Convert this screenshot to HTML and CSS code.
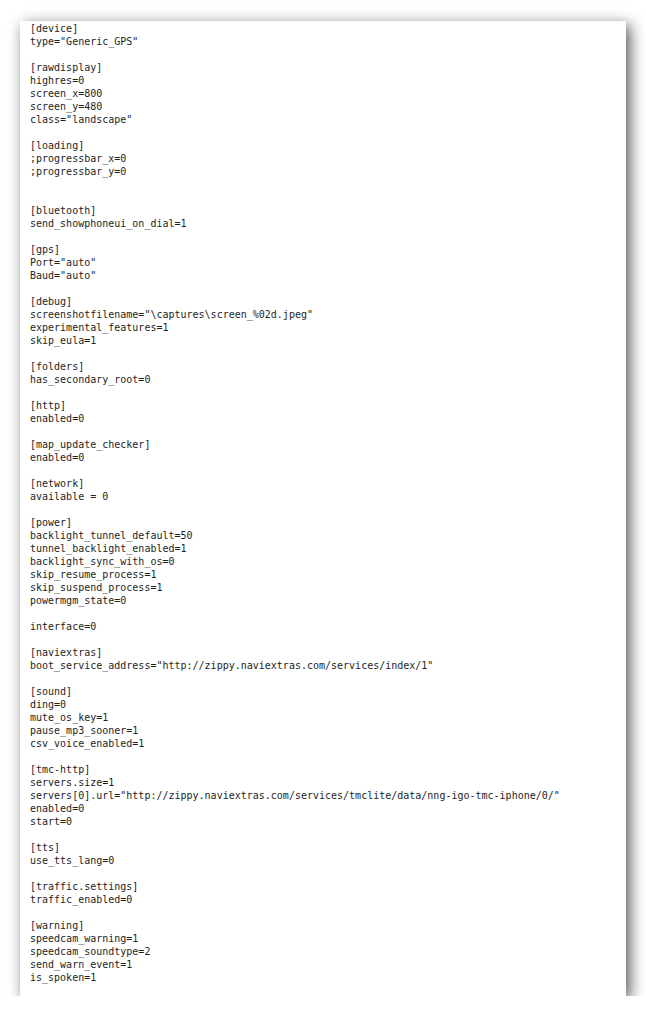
FILE: index.html
```html
<!DOCTYPE html>
<html>
<head>
<meta charset="utf-8">
<link rel="stylesheet" href="styles.css">
</head>
<body>
<div class="page">
<pre class="code">[device]
type="Generic_GPS"

[rawdisplay]
highres=0
screen_x=800
screen_y=480
class="landscape"

[loading]
;progressbar_x=0
;progressbar_y=0


[bluetooth]
send_showphoneui_on_dial=1

[gps]
Port="auto"
Baud="auto"

[debug]
screenshotfilename="\captures\screen_%02d.jpeg"
experimental_features=1
skip_eula=1

[folders]
has_secondary_root=0

[http]
enabled=0

[map_update_checker]
enabled=0

[network]
available = 0

[power]
backlight_tunnel_default=50
tunnel_backlight_enabled=1
backlight_sync_with_os=0
skip_resume_process=1
skip_suspend_process=1
powermgm_state=0

interface=0

[naviextras]
boot_service_address="http://zippy.naviextras.com/services/index/1"

[sound]
ding=0
mute_os_key=1
pause_mp3_sooner=1
csv_voice_enabled=1

[tmc-http]
servers.size=1
servers[0].url="http://zippy.naviextras.com/services/tmclite/data/nng-igo-tmc-iphone/0/"
enabled=0
start=0

[tts]
use_tts_lang=0

[traffic.settings]
traffic_enabled=0

[warning]
speedcam_warning=1
speedcam_soundtype=2
send_warn_event=1
is_spoken=1</pre>
</div>
</body>
</html>
```
FILE: styles.css
```css
html, body {
  margin: 0;
  padding: 0;
  background: #ffffff;
}
body {
  padding: 21px 0 0 20px;
}
.page {
  width: 606px;
  height: 975px;
  box-sizing: border-box;
  background: #ffffff;
  box-shadow: 4px 4px 14px rgba(0, 0, 0, 0.65);
  padding: 1px 0 0 10px;
}
.code {
  margin: 0;
  font-family: "DejaVu Sans Mono", "Liberation Mono", monospace;
  font-size: 10px;
  line-height: 13px;
  color: #1e1e1e;
  white-space: pre;
}
```
